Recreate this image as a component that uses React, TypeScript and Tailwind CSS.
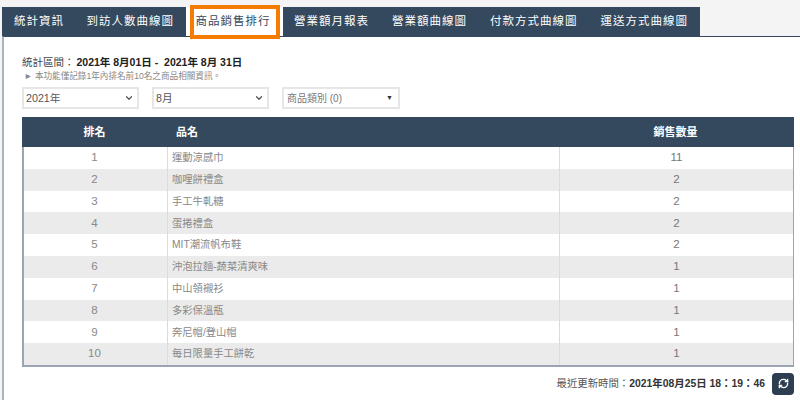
import React from 'react';
import { ChevronDown, RefreshCw } from 'lucide-react';

const tabs = ['統計資訊', '到訪人數曲線圖', '商品銷售排行', '營業額月報表', '營業額曲線圖', '付款方式曲線圖', '運送方式曲線圖'];

const rows = [
  { name: '運動涼感巾', qty: 11 },
  { name: '咖哩餅禮盒', qty: 2 },
  { name: '手工牛軋糖', qty: 2 },
  { name: '蛋捲禮盒', qty: 2 },
  { name: 'MIT潮流帆布鞋', qty: 2 },
  { name: '沖泡拉麵-蔬菜清爽味', qty: 1 },
  { name: '中山領襯衫', qty: 1 },
  { name: '多彩保溫瓶', qty: 1 },
  { name: '奔尼帽/登山帽', qty: 1 },
  { name: '每日限量手工餅乾', qty: 1 },
];

const App: React.FC = () => {
  return (
    <div className="w-[800px] h-[400px] overflow-hidden bg-[#f4f4f4] font-['Liberation_Sans','Noto_Sans_CJK_TC',sans-serif]">
      <div className="pt-[7px] pl-[2px]">
        <div className="flex w-fit h-[29px] bg-[#34495e] text-white text-[11.5px] tracking-[1px]">
          {tabs.map((tab, i) =>
            i === 2 ? (
              <div key={tab} className="relative w-[97px] flex items-center justify-center pr-[2px] bg-white text-[#34495e]">
                {tab}
                <div className="absolute left-[4px] top-[-2px] w-[90px] h-[34px] border-[4px] border-[#f57c00]" />
              </div>
            ) : (
              <div key={tab} className={`flex items-center ${i === 0 ? 'pl-[12px] pr-[11px]' : 'px-[11.5px]'}`}>{tab}</div>
            )
          )}
        </div>
      </div>
      <div className="ml-[2px] h-[364px] bg-white border-l-2 border-t border-[#a9b4c0] border-t-[#34495e] pl-[18px] pr-[6px] pt-[18px]">
        <div className="text-[10.5px] leading-[14px] text-[#222]">
          <span className="text-[#444]">統計區間：</span>
          <span className="font-bold ml-[2px]">2021年 8月01日 -&nbsp; 2021年 8月 31日</span>
        </div>
        <div className="mt-[1px] ml-[2px] text-[8.6px] leading-[12px] text-[#888]">► 本功能僅記錄1年內排名前10名之商品相關資訊。</div>
        <div className="mt-[5px] flex gap-[13px] text-[#555] text-[10.7px]">
          <div className="w-[117px] h-[22px] border-2 border-[#e6e6e6] flex items-center justify-between pl-[2px] pr-[3px]">
            2021年<ChevronDown size={10} strokeWidth={3} />
          </div>
          <div className="w-[117px] h-[22px] border-2 border-[#e6e6e6] flex items-center justify-between pl-[2px] pr-[3px]">
            8月<ChevronDown size={10} strokeWidth={3} />
          </div>
          <div className="w-[118px] h-[22px] border-2 border-[#e6e6e6] flex items-center justify-between pl-[3px] pr-[5px] text-[10px] text-[#777]">
            商品類別 (0)<span className="text-[7px] text-[#333]">▼</span>
          </div>
        </div>
        <div className="mt-[8px] border-l-2 border-r border-b-2 border-[#9aa5b1] w-[772px]">
          <div className="grid grid-cols-[145px_392px_1fr] h-[30px] -ml-[2px] -mr-[1px] bg-[#34495e] text-white text-[11px] font-bold items-center">
            <div className="text-center">排名</div>
            <div className="pl-[9px]">品名</div>
            <div className="text-center pr-[2px]">銷售數量</div>
          </div>
          {rows.map((row, i) => (
            <div key={i} className={`grid grid-cols-[143px_392px_1fr] h-[21.8px] items-center text-[11.5px] text-[#888] ${i % 2 === 1 ? 'bg-[#ebebeb]' : 'bg-white'}`}>
              <div className="text-center pr-[2px] text-[#888]">{i + 1}</div>
              <div className="h-full flex items-center pl-[4px] border-l border-[#dcdcdc] text-[10.3px]">{row.name}</div>
              <div className="h-full flex items-center justify-center border-l border-[#dcdcdc] text-[#777]">{row.qty}</div>
            </div>
          ))}
        </div>
        <div className="mt-[6px] w-[772px] flex items-center justify-end gap-[7px] text-[10.4px] text-[#333]">
          <div>
            <span className="text-[#555]">最近更新時間：</span>
            <span className="font-bold">2021年08月25日 18：19：46</span>
          </div>
          <div className="w-[22px] h-[22px] rounded-[4px] bg-[#2c3e50] flex items-center justify-center text-white">
            <RefreshCw size={11} strokeWidth={3} />
          </div>
        </div>
      </div>
    </div>
  );
};

export default App;
